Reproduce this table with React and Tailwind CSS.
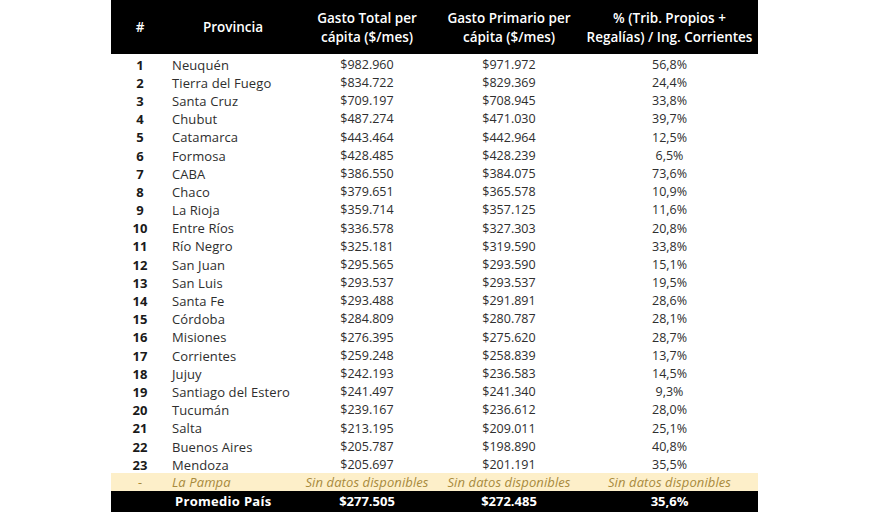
import React from "react";

const rows = [
  ["1", "Neuquén", "$982.960", "$971.972", "56,8%"],
  ["2", "Tierra del Fuego", "$834.722", "$829.369", "24,4%"],
  ["3", "Santa Cruz", "$709.197", "$708.945", "33,8%"],
  ["4", "Chubut", "$487.274", "$471.030", "39,7%"],
  ["5", "Catamarca", "$443.464", "$442.964", "12,5%"],
  ["6", "Formosa", "$428.485", "$428.239", "6,5%"],
  ["7", "CABA", "$386.550", "$384.075", "73,6%"],
  ["8", "Chaco", "$379.651", "$365.578", "10,9%"],
  ["9", "La Rioja", "$359.714", "$357.125", "11,6%"],
  ["10", "Entre Ríos", "$336.578", "$327.303", "20,8%"],
  ["11", "Río Negro", "$325.181", "$319.590", "33,8%"],
  ["12", "San Juan", "$295.565", "$293.590", "15,1%"],
  ["13", "San Luis", "$293.537", "$293.537", "19,5%"],
  ["14", "Santa Fe", "$293.488", "$291.891", "28,6%"],
  ["15", "Córdoba", "$284.809", "$280.787", "28,1%"],
  ["16", "Misiones", "$276.395", "$275.620", "28,7%"],
  ["17", "Corrientes", "$259.248", "$258.839", "13,7%"],
  ["18", "Jujuy", "$242.193", "$236.583", "14,5%"],
  ["19", "Santiago del Estero", "$241.497", "$241.340", "9,3%"],
  ["20", "Tucumán", "$239.167", "$236.612", "28,0%"],
  ["21", "Salta", "$213.195", "$209.011", "25,1%"],
  ["22", "Buenos Aires", "$205.787", "$198.890", "40,8%"],
  ["23", "Mendoza", "$205.697", "$201.191", "35,5%"],
];

const cols = "grid grid-cols-[58px_128px_140px_144px_177px]";

export default function App() {
  return (
    <div className="w-[880px] h-[512px] bg-white overflow-hidden font-['Open_Sans',sans-serif]">
      <div className="ml-[111px] w-[647px]">
        {/* Header */}
        <div className={`${cols} h-[54px] pt-[1px] bg-black text-white font-semibold text-[13.5px] leading-[19px] items-center text-center`}>
          <div>#</div>
          <div>Provincia</div>
          <div>Gasto Total per<br />cápita ($/mes)</div>
          <div>Gasto Primario per<br />cápita ($/mes)</div>
          <div>% (Trib. Propios +<br />Regalías) / Ing. Corrientes</div>
        </div>

        {/* Rows */}
        <div className="pt-[1px]">
          {rows.map((r) => (
            <div key={r[0]} className={`${cols} h-[18.2px] pt-[2px] items-center text-[12.5px] leading-none text-[#2e2e2e]`}>
              <div className="text-center font-bold text-[13px] text-[#1a1a1a]">{r[0]}</div>
              <div className="pl-[3px] text-[13px] tracking-[0.1px]">{r[1]}</div>
              <div className="text-center">{r[2]}</div>
              <div className="text-center">{r[3]}</div>
              <div className="text-center">{r[4]}</div>
            </div>
          ))}
        </div>

        {/* Sin datos */}
        <div className={`${cols} h-[18px] pt-[1px] items-center bg-[#fdefc9] text-[13px] tracking-[0.1px] leading-none italic text-[#a88a3c]`}>
          <div className="text-center">-</div>
          <div className="pl-[3px]">La Pampa</div>
          <div className="text-center whitespace-nowrap">Sin datos disponibles</div>
          <div className="text-center whitespace-nowrap">Sin datos disponibles</div>
          <div className="text-center whitespace-nowrap">Sin datos disponibles</div>
        </div>

        {/* Promedio */}
        <div className={`${cols} h-[21px] items-center bg-black text-white font-bold text-[13px] leading-none`}>
          <div></div>
          <div className="pl-[6px] tracking-[0.3px]">Promedio País</div>
          <div className="text-center">$277.505</div>
          <div className="text-center">$272.485</div>
          <div className="text-center">35,6%</div>
        </div>
      </div>
    </div>
  );
}
